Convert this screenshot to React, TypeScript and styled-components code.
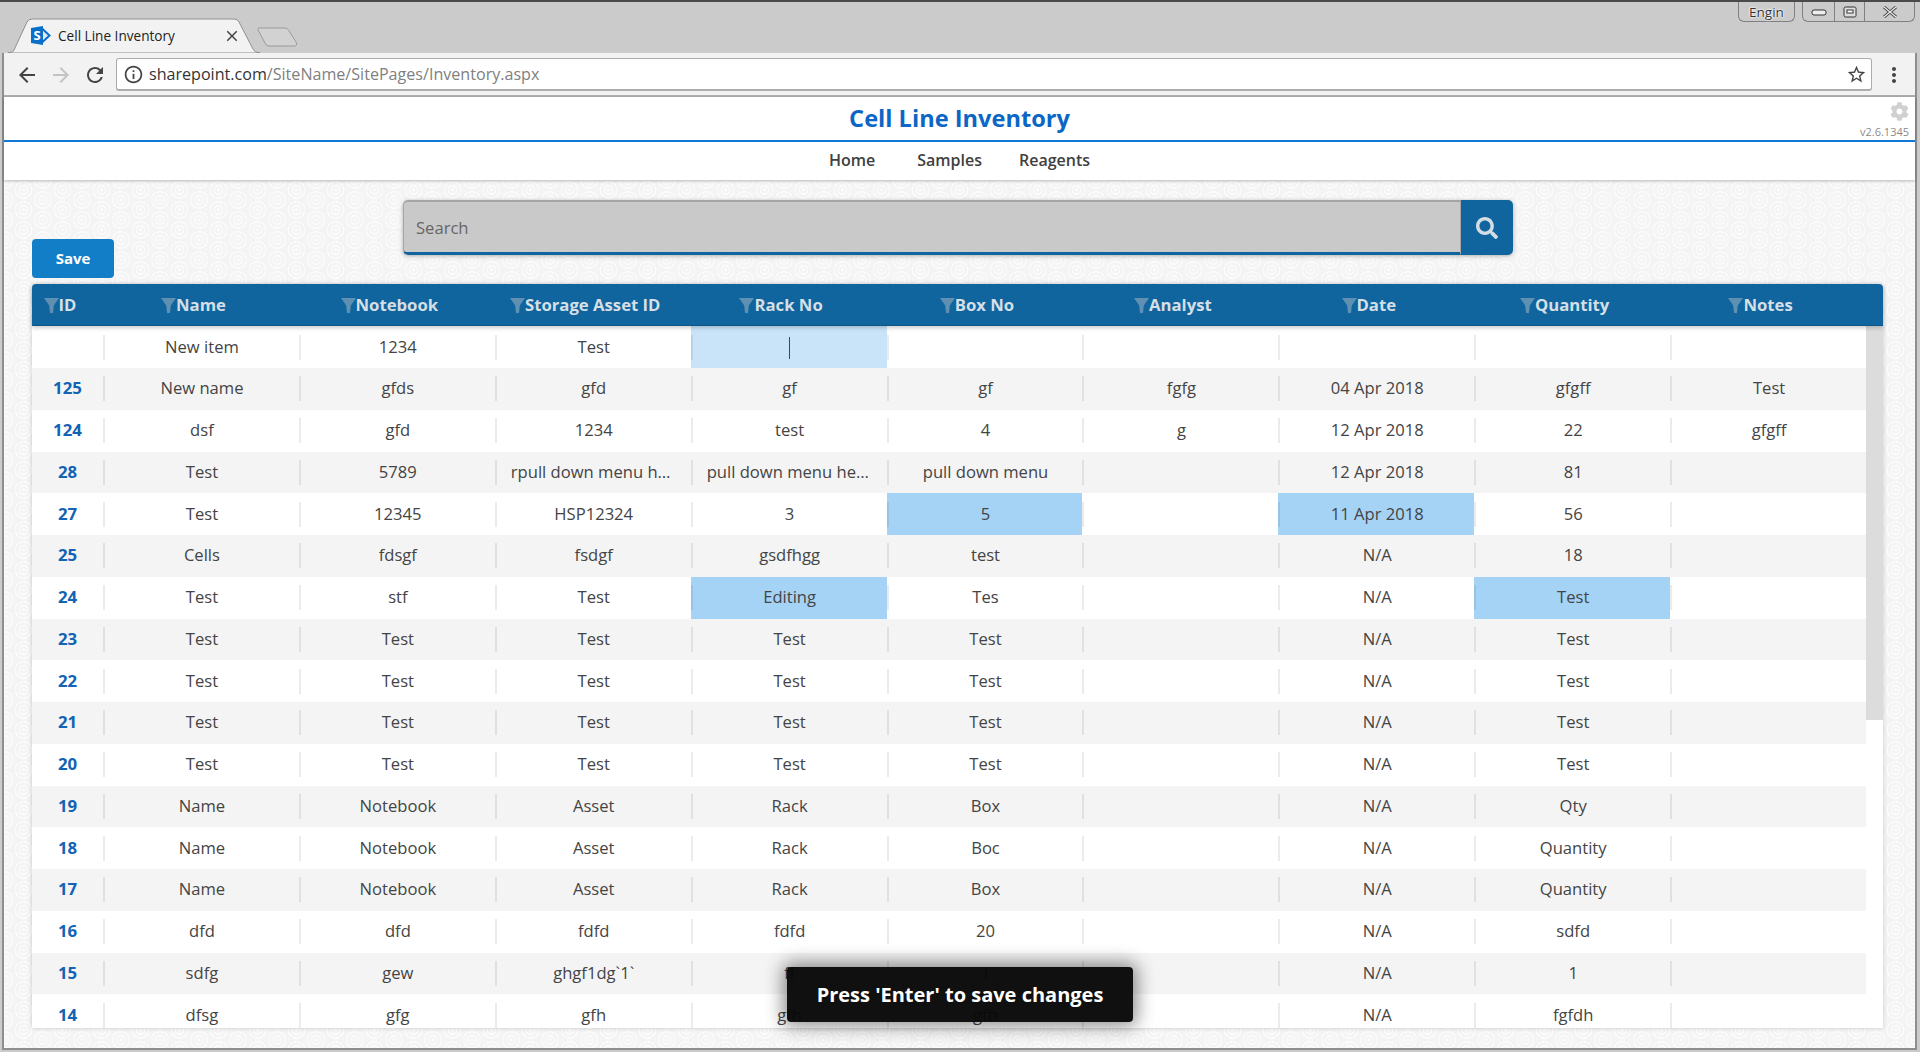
import React from 'react';
import styled, { createGlobalStyle } from 'styled-components';
import { MdArrowBack, MdArrowForward, MdRefresh, MdInfoOutline, MdStarBorder, MdMoreVert, MdClose } from 'react-icons/md';
import { FaCog, FaSearch } from 'react-icons/fa';

const Global = createGlobalStyle`
  html, body { margin: 0; padding: 0; overflow: hidden; background: #ccc; }
  * { box-sizing: border-box; }
  body { font-family: "Open Sans", "Liberation Sans", sans-serif; }
`;

const Window = styled.div`
  position: relative;
  width: 1920px;
  height: 1052px;
  display: flex;
  flex-direction: column;
  background: #cbcbcb;
  border-top: 2px solid #4a4a4a;
  padding: 0 3px 2px 2px;
`;

const TitleBar = styled.div`
  height: 51px;
  flex: none;
  display: flex;
  align-items: flex-end;
  padding-left: 6px;
`;

const Tab = styled.div`
  position: relative;
  width: 252px;
  height: 35px;
  display: flex;
  align-items: center;
  padding: 0 19px 0 23px;
  font-size: 13.6px;
  color: #222;
`;

const TabShape = styled.svg`
  position: absolute;
  inset: 0;
`;

const TabIcon = styled.svg`
  position: relative;
  flex: none;
  margin-right: 7px;
`;

const TabTitle = styled.span`
  position: relative;
  flex: 1;
  white-space: nowrap;
`;

const TabClose = styled.span`
  position: relative;
  display: flex;
  font-size: 18px;
  color: #444;
`;

const NewTab = styled.svg`
  margin: 0 0 6px -3px;
  flex: none;
`;

const WindowControls = styled.div`
  margin-left: auto;
  align-self: flex-start;
  display: flex;
  gap: 7px;
  margin-right: 2px;
`;

const UserBadge = styled.div`
  width: 57px;
  height: 20px;
  border: 1px solid #808080;
  border-top: 0;
  border-radius: 0 0 6px 6px;
  font-size: 13.5px;
  line-height: 20px;
  text-align: center;
  color: #333;
  text-shadow: 0 0 2px #fff, 0 0 2px #fff, 0 0 1px #fff;
`;

const ControlGroup = styled.div`
  display: flex;
  height: 20px;
  border: 1px solid #808080;
  border-top: 0;
  border-radius: 0 0 6px 6px;
`;

const ControlButton = styled.div<{ $w: number }>`
  width: ${p => p.$w}px;
  display: flex;
  align-items: center;
  justify-content: center;
  & + & { border-left: 1px solid #808080; }
`;

const Viewport = styled.div`
  flex: 1;
  min-height: 0;
  display: flex;
  flex-direction: column;
  border: 2px solid #8e8e8e;
  border-top: 0;
`;

const Toolbar = styled.div`
  flex: none;
  height: 44px;
  display: flex;
  align-items: center;
  background: #f2f2f2;
  border-bottom: 2px solid #b0b0b0;
  padding: 2px 0 1px 6px;
`;

const NavIcon = styled.span<{ $off?: boolean }>`
  width: 34px;
  display: flex;
  justify-content: center;
  font-size: 24px;
  color: ${p => (p.$off ? '#c4c4c4' : '#444')};
`;

const Address = styled.div`
  flex: 1;
  height: 33px;
  margin-left: 4px;
  display: flex;
  align-items: center;
  background: #fff;
  border: 1px solid #acacac;
  border-bottom-width: 2px;
  border-radius: 3px;
  padding: 0 4px 0 6px;
  font-size: 16.1px;
  color: #808080;
`;

const Host = styled.span`
  color: #333;
`;

const AddressIcon = styled.span<{ $end?: boolean }>`
  display: flex;
  font-size: 21px;
  color: #444;
  margin: ${p => (p.$end ? '0 0 0 auto' : '0 5px 0 0')};
`;

const MoreButton = styled.span`
  width: 43px;
  display: flex;
  justify-content: center;
  font-size: 24px;
  color: #444;
`;

const PageHeader = styled.header`
  position: relative;
  z-index: 1;
  flex: none;
  background: #fff;
  box-shadow: 0 1px 3px rgba(0, 0, 0, 0.25);
`;

const TitleRow = styled.div`
  position: relative;
  height: 44.5px;
  border-bottom: 2px solid #0f7ad6;
  display: flex;
  align-items: center;
  justify-content: center;
`;

const Title = styled.h1`
  margin: 0;
  font-size: 23.6px;
  font-weight: 700;
  color: #0b66c6;
`;

const Meta = styled.div`
  position: absolute;
  right: 6px;
  bottom: 2px;
  display: flex;
  flex-direction: column;
  align-items: flex-end;
  gap: 5px;
  font-size: 11px;
  line-height: 12px;
  color: #8a8a8a;
`;

const Gear = styled.span`
  display: flex;
  font-size: 19px;
  color: #d0d0d0;
`;

const Nav = styled.nav`
  height: 38.5px;
  padding-bottom: 1px;
  display: flex;
  align-items: center;
  justify-content: center;
  font-size: 16px;
  font-weight: 600;
  color: #404040;
`;

const NavItem = styled.span<{ $gap: number }>`
  margin-right: ${p => p.$gap}px;
`;

const Content = styled.main`
  flex: 1;
  min-height: 0;
  display: flex;
  flex-direction: column;
  padding: 20px 32px 20px 28px;
  background-color: #f4f4f4;
  background-image:
    radial-gradient(circle, #fbfbfb 0 1.5px, #f4f4f4 1.5px 3.5px, #fbfbfb 3.5px 5px, #f4f4f4 5px 7.5px, #fbfbfb 7.5px 9px, #f4f4f4 9px 10px, transparent 10px),
    radial-gradient(circle, #fbfbfb 0 1.5px, #f4f4f4 1.5px 3.5px, #fbfbfb 3.5px 5px, #f4f4f4 5px 7.5px, #fbfbfb 7.5px 9px, #f4f4f4 9px 10px, transparent 10px);
  background-size: 39px 20px;
  background-position: 0 0, 19.5px 10px;
`;

const ActionRow = styled.div`
  flex: none;
  height: 78px;
  margin-bottom: 6px;
  display: grid;
  grid-template-columns: 371px 1110px;
`;

const SaveButton = styled.button`
  align-self: end;
  width: 82px;
  height: 39px;
  padding: 0 0 2px;
  border: 0;
  border-radius: 4px;
  background: #127ec8;
  color: #fff;
  font: 700 15px "Open Sans", sans-serif;
`;

const Search = styled.div`
  align-self: start;
  height: 55px;
  display: flex;
  border-radius: 5px;
  box-shadow: 0 1px 4px rgba(0, 0, 0, 0.3);
`;

const SearchField = styled.div`
  flex: 1;
  display: flex;
  align-items: center;
  padding-left: 12px;
  background: #c9c9c9;
  border: 1px solid #a5a5a5;
  border-top-width: 2px;
  border-bottom: 3px solid #10659f;
  border-radius: 5px 0 0 5px;
  font-size: 16.6px;
  color: #666;
`;

const SearchButton = styled.div`
  width: 52px;
  display: flex;
  align-items: center;
  justify-content: center;
  background: #10659f;
  border-radius: 0 5px 5px 0;
  font-size: 22px;
  color: #d4dde3;
`;

const TableCard = styled.section`
  flex: 1;
  min-height: 0;
  display: flex;
  flex-direction: column;
  background: #fff;
  border-radius: 4px 4px 0 0;
  box-shadow: 0 0 4px rgba(0, 0, 0, 0.2);
`;

const HeaderRow = styled.div`
  flex: none;
  height: 42.25px;
  display: grid;
  grid-template-columns: 71px repeat(9, 195.9px);
  background: #10659f;
  border-radius: 4px 4px 0 0;
  border-bottom: 1px solid #0b558a;
  box-shadow: 0 2px 4px rgba(0, 0, 0, 0.2);
  position: relative;
`;

const HeaderCell = styled.div`
  display: flex;
  align-items: center;
  justify-content: center;
`;

const HeaderLabel = styled.span`
  position: relative;
  font-size: 16.7px;
  font-weight: 700;
  color: #d5dfe6;
  white-space: nowrap;
`;

const Funnel = styled.svg`
  position: absolute;
  right: 100%;
  top: 5px;
`;

const TableBody = styled.div`
  flex: 1;
  min-height: 0;
  display: flex;
  overflow: hidden;
`;

const Rows = styled.div`
  width: 1834.1px;
  flex: none;
  display: grid;
  grid-auto-rows: 41.75px;
  align-content: start;
`;

const Row = styled.div<{ $alt: boolean }>`
  display: grid;
  grid-template-columns: 71px repeat(9, 195.9px);
  background: ${p => (p.$alt ? '#f4f4f4' : '#fff')};
`;

const Cell = styled.div<{ $tone?: 'edit' | 'sel' }>`
  display: flex;
  align-items: center;
  min-width: 0;
  background: ${p => (p.$tone === 'edit' ? '#c9e4f9' : p.$tone === 'sel' ? '#a5d3f6' : 'transparent')};
`;

const CellText = styled.div<{ $first?: boolean; $id?: boolean }>`
  flex: 1;
  min-width: 0;
  height: 25px;
  line-height: 24px;
  padding: 0 14px;
  text-align: center;
  font-size: ${p => (p.$id ? 16.8 : 16.6)}px;
  color: ${p => (p.$id ? '#1263b4' : '#444')};
  font-weight: ${p => (p.$id ? 700 : 400)};
  border-left: ${p => (p.$first ? '0' : '2px solid rgba(0,0,0,0.08)')};
  white-space: nowrap;
  overflow: hidden;
  text-overflow: ellipsis;
`;

const Caret = styled.span`
  display: inline-block;
  width: 1.5px;
  height: 22px;
  vertical-align: middle;
  background: #444;
`;

const ScrollTrack = styled.div`
  flex: 1;
  background: #fff;
`;

const ScrollThumb = styled.div`
  height: 394px;
  background: #dcdcdc;
`;

const Toast = styled.div`
  position: absolute;
  left: 787px;
  bottom: 30px;
  width: 346px;
  height: 55px;
  display: flex;
  align-items: center;
  justify-content: center;
  background: rgba(8, 8, 8, 0.97);
  border-radius: 4px;
  box-shadow: 0 0 18px 4px rgba(0, 0, 0, 0.45);
  color: #fff;
  font-size: 20px;
  font-weight: 700;
  z-index: 5;
`;

const columns = ['ID', 'Name', 'Notebook', 'Storage Asset ID', 'Rack No', 'Box No', 'Analyst', 'Date', 'Quantity', 'Notes'];

const LONG = 'pull down menu header';
const rows: string[][] = [
  ['', 'New item', '1234', 'Test', '|', '', '', '', '', ''],
  ['125', 'New name', 'gfds', 'gfd', 'gf', 'gf', 'fgfg', '04 Apr 2018', 'gfgff', 'Test'],
  ['124', 'dsf', 'gfd', '1234', 'test', '4', 'g', '12 Apr 2018', '22', 'gfgff'],
  ['28', 'Test', '5789', 'r' + LONG, LONG, 'pull down menu', '', '12 Apr 2018', '81', ''],
  ['27', 'Test', '12345', 'HSP12324', '3', '5', '', '11 Apr 2018', '56', ''],
  ['25', 'Cells', 'fdsgf', 'fsdgf', 'gsdfhgg', 'test', '', 'N/A', '18', ''],
  ['24', 'Test', 'stf', 'Test', 'Editing', 'Tes', '', 'N/A', 'Test', ''],
  ['23', 'Test', 'Test', 'Test', 'Test', 'Test', '', 'N/A', 'Test', ''],
  ['22', 'Test', 'Test', 'Test', 'Test', 'Test', '', 'N/A', 'Test', ''],
  ['21', 'Test', 'Test', 'Test', 'Test', 'Test', '', 'N/A', 'Test', ''],
  ['20', 'Test', 'Test', 'Test', 'Test', 'Test', '', 'N/A', 'Test', ''],
  ['19', 'Name', 'Notebook', 'Asset', 'Rack', 'Box', '', 'N/A', 'Qty', ''],
  ['18', 'Name', 'Notebook', 'Asset', 'Rack', 'Boc', '', 'N/A', 'Quantity', ''],
  ['17', 'Name', 'Notebook', 'Asset', 'Rack', 'Box', '', 'N/A', 'Quantity', ''],
  ['16', 'dfd', 'dfd', 'fdfd', 'fdfd', '20', '', 'N/A', 'sdfd', ''],
  ['15', 'sdfg', 'gew', 'ghgf1dg`1`', 'ff', '1', '', 'N/A', '1', ''],
  ['14', 'dfsg', 'gfg', 'gfh', 'gfh', 'gfh', '', 'N/A', 'fgfdh', ''],
];

const toneFor = (r: number, c: number): 'edit' | 'sel' | undefined => {
  if (r === 0 && c === 4) return 'edit';
  if ((r === 4 && (c === 5 || c === 7)) || (r === 6 && (c === 4 || c === 8))) return 'sel';
  return undefined;
};

const SharePointLogo = () => (
  <TabIcon width="20" height="19" viewBox="0 0 20 19">
    <path d="M11 2.5 L18.5 9.5 L11 16.5" fill="#dcecf9" stroke="#0a6fc9" strokeWidth="2" />
    <path d="M0 2 L12 0 V19 L0 17 Z" fill="#0a6fc9" />
    <text x="6" y="14" fontSize="13" fontWeight="700" fill="#fff" textAnchor="middle" fontFamily="Open Sans, sans-serif">S</text>
  </TabIcon>
);

const FunnelIcon = () => (
  <Funnel width="15" height="15" viewBox="0 0 15 15">
    <path d="M0 0 H15 L9.8 7.5 L9 15 H6 L5.2 7.5 Z" fill="#5f90b2" />
  </Funnel>
);

export default function App() {
  return (
    <Window>
      <Global />
      <TitleBar>
        <Tab>
          <TabShape width="252" height="35" viewBox="0 0 252 35">
            <path d="M0 34.5 H2 Q5 34.5 6 32 L19 4 Q20.5 1 24 1 H226 Q229.5 1 231 4 L245 31 Q247 34.5 250 34.5 H252 V35 H0 Z" fill="#f2f2f2" stroke="#8f8f8f" />
          </TabShape>
          <SharePointLogo />
          <TabTitle>Cell Line Inventory</TabTitle>
          <TabClose><MdClose /></TabClose>
        </Tab>
        <NewTab width="41" height="20" viewBox="0 0 41 20">
          <path d="M2 1 H28 Q30 1 31.5 3 L39 15 Q41 19 37 19 H12 Q9 19 8 16 L1 3 Q0.5 1 2 1 Z" fill="#d2d2d2" stroke="#9a9a9a" />
        </NewTab>
        <WindowControls>
          <UserBadge>Engin</UserBadge>
          <ControlGroup>
            <ControlButton $w={31}>
              <svg width="16" height="8" viewBox="0 0 16 8"><rect x="1" y="2" width="14" height="5" rx="2" fill="#eee" stroke="#333" /></svg>
            </ControlButton>
            <ControlButton $w={30}>
              <svg width="14" height="12" viewBox="0 0 14 12"><rect x="1" y="1" width="12" height="10" rx="1.5" fill="#ddd" stroke="#333" /><rect x="4" y="4" width="6" height="3" fill="#fff" stroke="#333" /></svg>
            </ControlButton>
            <ControlButton $w={50}>
              <svg width="14" height="12" viewBox="0 0 14 12"><path d="M1 1 L13 11 M13 1 L1 11" stroke="#444" strokeWidth="3" /><path d="M1 1 L13 11 M13 1 L1 11" stroke="#eee" strokeWidth="1.2" /></svg>
            </ControlButton>
          </ControlGroup>
        </WindowControls>
      </TitleBar>

      <Viewport>
        <Toolbar>
          <NavIcon><MdArrowBack /></NavIcon>
          <NavIcon $off><MdArrowForward /></NavIcon>
          <NavIcon><MdRefresh /></NavIcon>
          <Address>
            <AddressIcon><MdInfoOutline /></AddressIcon>
            <span><Host>sharepoint.com</Host>/SiteName/SitePages/Inventory.aspx</span>
            <AddressIcon $end><MdStarBorder /></AddressIcon>
          </Address>
          <MoreButton><MdMoreVert /></MoreButton>
        </Toolbar>

        <PageHeader>
          <TitleRow>
            <Title>Cell Line Inventory</Title>
            <Meta>
              <Gear><FaCog /></Gear>
              <span>v2.6.1345</span>
            </Meta>
          </TitleRow>
          <Nav>
            <NavItem $gap={42}>Home</NavItem>
            <NavItem $gap={37}>Samples</NavItem>
            <NavItem $gap={0}>Reagents</NavItem>
          </Nav>
        </PageHeader>

        <Content>
          <ActionRow>
            <SaveButton>Save</SaveButton>
            <Search>
              <SearchField>Search</SearchField>
              <SearchButton><FaSearch /></SearchButton>
            </Search>
          </ActionRow>
          <TableCard>
            <HeaderRow>
              {columns.map(c => (
                <HeaderCell key={c}>
                  <HeaderLabel><FunnelIcon />{c}</HeaderLabel>
                </HeaderCell>
              ))}
            </HeaderRow>
            <TableBody>
              <Rows>
                {rows.map((row, r) => (
                  <Row key={r} $alt={r % 2 === 1}>
                    {row.map((v, c) => (
                      <Cell key={c} $tone={toneFor(r, c)}>
                        <CellText $first={c === 0} $id={c === 0}>
                          {v === '|' ? <Caret /> : v}
                        </CellText>
                      </Cell>
                    ))}
                  </Row>
                ))}
              </Rows>
              <ScrollTrack><ScrollThumb /></ScrollTrack>
            </TableBody>
          </TableCard>
        </Content>
      </Viewport>
      <Toast>Press 'Enter' to save changes</Toast>
    </Window>
  );
}
